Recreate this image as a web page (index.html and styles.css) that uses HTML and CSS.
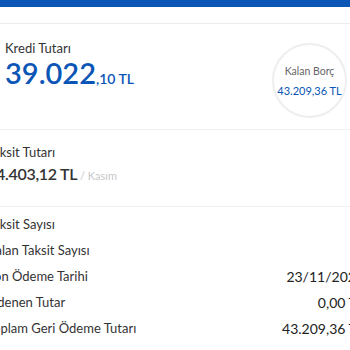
FILE: index.html
```html
<!DOCTYPE html>
<html lang="tr">
<head>
<meta charset="utf-8">
<link rel="stylesheet" href="styles.css">
</head>
<body>
<div class="topbar"></div>
<div class="subbar"></div>
<section class="summary">
  <div class="amount-block">
    <div class="label">Kredi Tutarı</div>
    <div class="big-amount"><span class="int">39.022</span><span class="dec">,10 TL</span></div>
  </div>
  <div class="circle">
    <div class="circle-label">Kalan Borç</div>
    <div class="circle-value">43.209,36 TL</div>
  </div>
</section>
<section class="installment">
  <div class="label">Taksit Tutarı</div>
  <div class="inst-amount"><span class="inst-value">14.403,12 TL</span><span class="inst-month"> / Kasım</span></div>
</section>
<section class="details">
  <div class="row"><span class="row-label">Taksit Sayısı</span><span class="row-value"></span></div>
  <div class="row"><span class="row-label">Kalan Taksit Sayısı</span><span class="row-value"></span></div>
  <div class="row"><span class="row-label">Son Ödeme Tarihi</span><span class="row-value">23/11/2023</span></div>
  <div class="row"><span class="row-label">Ödenen Tutar</span><span class="row-value">0,00 TL</span></div>
  <div class="row"><span class="row-label">Toplam Geri Ödeme Tutarı</span><span class="row-value">43.209,36 TL</span></div>
</section>
</body>
</html>
```
FILE: styles.css
```css
html, body {
  margin: 0;
  padding: 0;
  background: #fff;
  overflow: hidden;
}
body {
  width: 350px;
  height: 350px;
  font-family: Lato, "Open Sans", sans-serif;
  color: #333;
}
.topbar {
  height: 7px;
  background: #0a55b5;
}
.subbar {
  height: 16px;
  border-bottom: 1px solid #ececec;
}
.summary {
  display: flex;
  justify-content: space-between;
  align-items: center;
  height: 105px;
  padding: 0 3px 0 5px;
  border-bottom: 1px solid #f0f0f0;
}
.amount-block {
  margin-top: -17px;
}
.label {
  font-size: 13px;
  color: #333;
  line-height: 16px;
}
.big-amount {
  color: #0a55b5;
  line-height: 34px;
  margin-top: 0;
}
.big-amount .int {
  font-size: 29px;
  font-weight: 600;
}
.big-amount .dec {
  font-size: 14px;
  font-weight: 600;
}
.circle {
  width: 71px;
  height: 71px;
  border: 2px solid #eeeeee;
  border-radius: 50%;
  display: flex;
  flex-direction: column;
  align-items: center;
  justify-content: center;
  gap: 7px;
  margin-top: 8px;
}
.circle-label {
  font-size: 10.5px;
  color: #666;
}
.circle-value {
  font-size: 11px;
  color: #0a55b5;
}
.installment {
  margin-left: -13px;
  height: 77px;
  box-sizing: border-box;
  padding-top: 14px;
  border-bottom: 1px solid #f0f0f0;
}
.inst-amount {
  margin-top: 3px;
  line-height: 22px;
}
.inst-value {
  font-size: 16px;
  font-weight: 600;
  color: #333;
  letter-spacing: -0.3px;
}
.inst-month {
  font-size: 11px;
  color: #c8c8c8;
}
.details {
  margin-left: -13px;
  margin-right: -14px;
  padding-top: 4px;
}
.row {
  display: flex;
  justify-content: space-between;
  align-items: center;
  height: 26px;
}
.row-label {
  font-size: 13px;
  color: #333;
}
.row-value {
  font-size: 14px;
  color: #222;
}
```
